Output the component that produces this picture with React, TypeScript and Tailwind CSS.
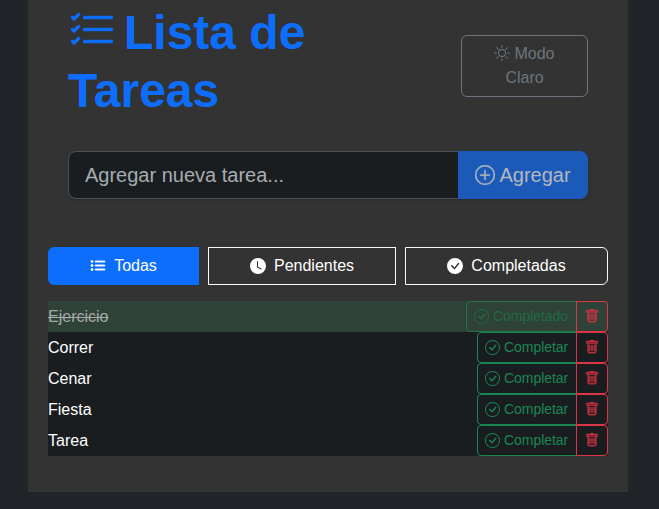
import { useState } from "react";
import {
  BsListCheck,
  BsSun,
  BsPlusCircle,
  BsListUl,
  BsClockFill,
  BsCheckCircleFill,
  BsCheckCircle,
  BsTrash,
} from "react-icons/bs";

const tasks = [
  { name: "Ejercicio", done: true },
  { name: "Correr", done: false },
  { name: "Cenar", done: false },
  { name: "Fiesta", done: false },
  { name: "Tarea", done: false },
];

function TaskRow({ name, done }: { name: string; done: boolean }) {
  return (
    <li className={`flex h-[31px] items-center justify-between ${done ? "bg-[#2f4238]" : "bg-[#1a1d20]"}`}>
      <span className={done ? "text-[#a4aaa7] line-through" : "text-white"}>{name}</span>
      <div className="flex h-[31px] text-sm">
        <button
          disabled={done}
          className={`flex items-center rounded-l border pr-2 pb-px pl-[7px] tracking-[-0.05px] ${
            done ? "w-[111px] border-[#237549] text-[#206a45]" : "w-[100px] border-[#198754] text-[#198754]"
          }`}
        >
          <BsCheckCircle className="mr-1 size-[15px] shrink-0" />
          {done ? "Completado" : "Completar"}
        </button>
        <button className="-ml-px flex w-8 items-center justify-center rounded-r border border-[#dc3545] pb-px text-[#dc3545]">
          <BsTrash className="size-[14px] stroke-current stroke-[0.4px]" />
        </button>
      </div>
    </li>
  );
}

export default function App() {
  const [text, setText] = useState("");
  return (
    <div className="h-[509px] overflow-hidden bg-[#212529] px-[28px] font-['Liberation_Sans',Arial,sans-serif] text-base text-white">
      <main className="mr-[3px] h-[492px] bg-[#333333] px-5">
        <header className="flex h-[119px] justify-between px-5 pt-[3.6px]">
          <h1 className="w-[300px] text-[48px] leading-[58px] font-bold text-[#0d6efd]">
            <BsListCheck className="mr-2 inline stroke-current stroke-[0.15px] align-[-6px]" />
            Lista de Tareas
          </h1>
          <button className="mt-[31.4px] h-[62px] w-[127px] rounded-md border border-[#6c757d] px-5 leading-6 text-[#6c757d]">
            <BsSun className="mr-1 inline align-[-2px]" />
            Modo Claro
          </button>
        </header>
        <form className="mx-5 mt-8 flex h-12 text-xl shadow-sm">
          <input
            value={text}
            onChange={(e) => setText(e.target.value)}
            placeholder="Agregar nueva tarea..."
            className="min-w-0 flex-1 rounded-l-lg border border-[#495057] bg-[#1a1d20] px-4 text-[#dee2e6] placeholder:text-[#a7acb1]"
          />
          <button
            type="button"
            className="-ml-px flex w-[130px] items-center justify-center rounded-r-lg border border-[#1b5ab8] bg-[#1b5ab8] text-[#b4b8bd]"
          >
            <BsPlusCircle className="mr-1 stroke-current stroke-[0.3px]" />
            Agregar
          </button>
        </form>
        <nav className="mt-12 flex h-[38px] gap-[9px]">
          <button className="flex w-[151px] items-center justify-center rounded-l-md bg-[#0d6efd]">
            <BsListUl className="mr-2 stroke-current stroke-[0.9px]" />
            Todas
          </button>
          <button className="flex w-[188px] items-center justify-center border border-[#f8f9fa]">
            <BsClockFill className="mr-2" />
            Pendientes
          </button>
          <button className="flex w-[203px] items-center justify-center rounded-r-md border border-[#f8f9fa]">
            <BsCheckCircleFill className="mr-2" />
            Completadas
          </button>
        </nav>
        <ul className="mt-4">
          {tasks.map((t) => (
            <TaskRow key={t.name} {...t} />
          ))}
        </ul>
      </main>
    </div>
  );
}
